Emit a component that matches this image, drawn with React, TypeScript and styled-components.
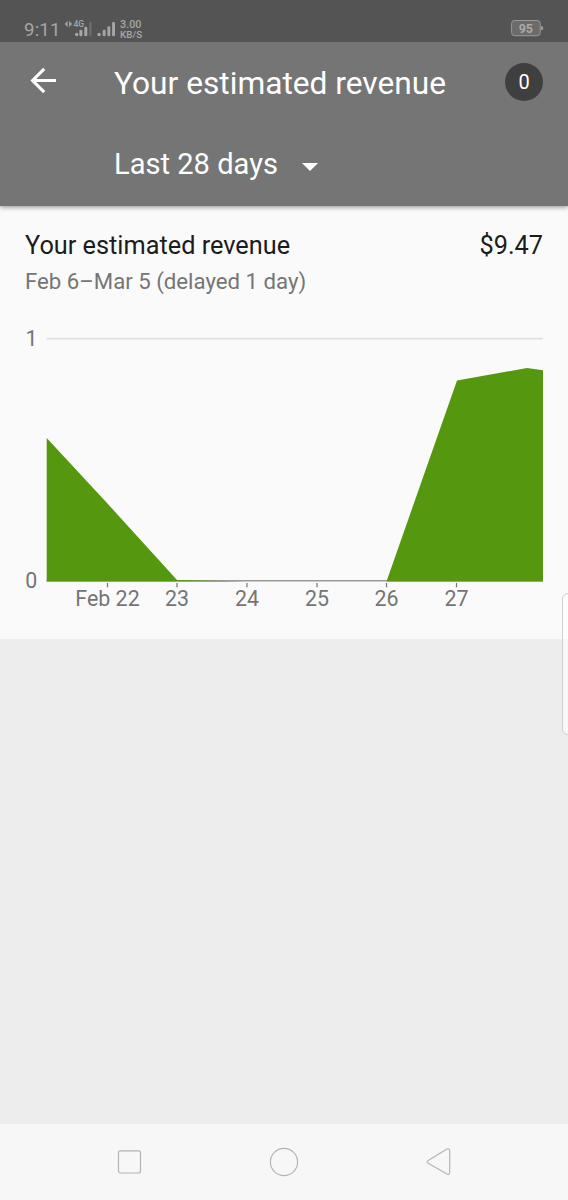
import React from "react";
import styled, { createGlobalStyle } from "styled-components";

const GlobalStyle = createGlobalStyle`
  * { box-sizing: border-box; }
  body { margin: 0; background: #ededed; font-family: Roboto, "Liberation Sans", sans-serif; }
`;

const Screen = styled.div`
  position: relative;
  display: flex;
  flex-direction: column;
  width: 568px;
  height: 1200px;
  overflow: hidden;
  background: #ededed;
`;

const StatusBar = styled.div`
  position: relative;
  z-index: 2;
  display: flex;
  justify-content: space-between;
  align-items: flex-start;
  height: 42px;
  padding: 18px 24px 0 24px;
  background: #545454;
  color: #a6a6a6;
`;

const StatusGroup = styled.div`
  display: flex;
  align-items: flex-start;
`;

const Clock = styled.span`
  width: 40px;
  font-size: 18.6px;
  line-height: 24px;
  letter-spacing: 0.2px;
  white-space: nowrap;
`;

const Speed = styled.span`
  display: flex;
  flex-direction: column;
  margin-top: 2px;
  font-weight: 500;
`;

const SpeedLine = styled.span<{ $size: number }>`
  font-size: ${({ $size }) => $size}px;
  line-height: 10px;
`;

const Header = styled.header`
  position: relative;
  z-index: 1;
  display: flex;
  flex-direction: column;
  height: 164px;
  background: #757575;
  color: #fff;
  box-shadow: 0 1px 5px rgba(0, 0, 0, 0.45);
`;

const TitleRow = styled.div`
  display: flex;
  flex: none;
  align-items: center;
  height: 79px;
  padding: 0 25px 0 30px;
`;

const Title = styled.h1`
  flex: 1;
  margin: 4px 0 0 57px;
  font-size: 31.7px;
  font-weight: 400;
  line-height: 38px;
  white-space: nowrap;
`;

const Count = styled.span`
  width: 38px;
  height: 38px;
  border-radius: 50%;
  background: #3f3f3f;
  font-size: 20px;
  line-height: 39px;
  text-align: center;
`;

const PeriodRow = styled.div`
  display: flex;
  flex: none;
  align-items: center;
  gap: 24px;
  height: 86px;
  padding-left: 114px;
  font-size: 29.1px;
`;

const DropdownArrow = styled.svg`
  margin-top: 6px;
`;

const Card = styled.section`
  height: 433px;
  padding-top: 23px;
  background: #fafafa;
`;

const Summary = styled.div`
  display: flex;
  justify-content: space-between;
  padding: 0 25px;
  color: #1c1c1c;
  font-size: 25.3px;
  line-height: 34px;
`;

const DateRange = styled.div`
  margin-top: -1px;
  padding: 0 25px;
  color: #757575;
  font-size: 22.2px;
  line-height: 38px;
`;

const Chart = styled.svg`
  display: block;
  font-family: Roboto, "Liberation Sans", sans-serif;
  font-size: 21.4px;
`;

const NavBar = styled.nav`
  display: flex;
  align-items: center;
  justify-content: space-between;
  height: 76px;
  margin-top: auto;
  padding: 0 115px;
  background: #f7f7f7;
`;

const EdgeHandle = styled.div`
  position: absolute;
  top: 593px;
  right: -8px;
  width: 14px;
  height: 142px;
  border: 1px solid #cfcfcf;
  border-radius: 6px;
  background: rgba(255, 255, 255, 0.6);
`;

const ticks = [
  { x: 107.5, label: "Feb 22" },
  { x: 177, label: "23" },
  { x: 247, label: "24" },
  { x: 317, label: "25" },
  { x: 386.5, label: "26" },
  { x: 456.5, label: "27" },
];

function SignalIcons() {
  return (
    <svg width="56" height="24" viewBox="64 18 56 24" fill="#a6a6a6">
      <path d="M64.8 24l2.8-3.2v6.4zM72 24l-2.8-3.2v6.4z" />
      <text x="73.5" y="27.4" fontSize="8.5" fontWeight="500">4G</text>
      <circle cx="76.7" cy="34.5" r="1.7" />
      <rect x="79.4" y="29.8" width="3" height="6.4" rx="1.2" />
      <rect x="84.3" y="26.8" width="3" height="9.4" rx="1.2" />
      <rect x="89.2" y="22" width="2.4" height="14.2" rx="1" fill="#6d6d6d" />
      <circle cx="99.1" cy="34.5" r="1.7" />
      <rect x="102.7" y="29.8" width="2.9" height="6.4" rx="1.2" />
      <rect x="107.4" y="26.3" width="2.9" height="9.9" rx="1.2" />
      <rect x="112.1" y="22" width="2.9" height="14.2" rx="1.2" />
    </svg>
  );
}

function Battery() {
  return (
    <svg width="33" height="20" viewBox="0 0 33 20">
      <rect x="0.6" y="2.5" width="28.6" height="15.2" rx="3" fill="#6b6b6b" stroke="#999" />
      <path d="M30 8.2h1.3q.9 0 .9 1.9t-.9 1.9H30z" fill="#999" />
      <text x="14.8" y="14.7" textAnchor="middle" fontSize="12.5" fontWeight="700" fill="#a9a9a9">95</text>
    </svg>
  );
}

export default function App() {
  return (
    <Screen>
      <GlobalStyle />
      <StatusBar>
        <StatusGroup>
          <Clock>9:11</Clock>
          <SignalIcons />
          <Speed>
            <SpeedLine $size={10.8}>3.00</SpeedLine>
            <SpeedLine $size={9.8}>KB/S</SpeedLine>
          </Speed>
        </StatusGroup>
        <Battery />
      </StatusBar>
      <Header>
        <TitleRow>
          <svg width="27" height="27" viewBox="0 0 27 27" fill="none" stroke="#fff" strokeWidth="3.1">
            <path d="M26 12.5H3M14.2 .9L2.6 12.5l11.6 11.6" />
          </svg>
          <Title>Your estimated revenue</Title>
          <Count>0</Count>
        </TitleRow>
        <PeriodRow>
          <span>Last 28 days</span>
          <DropdownArrow width="16" height="8" viewBox="0 0 16 8" fill="#fff">
            <path d="M0 0h16L8 8z" />
          </DropdownArrow>
        </PeriodRow>
      </Header>
      <Card>
        <Summary>
          <span>Your estimated revenue</span>
          <span>$9.47</span>
        </Summary>
        <DateRange>Feb 6–Mar 5 (delayed 1 day)</DateRange>
        <Chart width="568" height="320" viewBox="0 300 568 320">
          <path d="M46.5 338.6H543" stroke="#e0e0e0" strokeWidth="1.7" />
          <path d="M46.5 580.8H543" stroke="#9a9a9a" strokeWidth="1.6" />
          <path
            d="M46.7 438L107 503L177 580L247 581.4H46.7zM386.5 581.4L457 380.5L527 368L543 370.3V581.4z"
            fill="#55980f"
          />
          <g fill="#757575">
            <text x="25.5" y="345.5">1</text>
            <text x="25.3" y="588">0</text>
            {ticks.map(({ x, label }) => (
              <React.Fragment key={label}>
                <rect x={x - 0.6} y="583" width="1.2" height="4.3" />
                <text x={x} y="606" textAnchor="middle">{label}</text>
              </React.Fragment>
            ))}
          </g>
        </Chart>
      </Card>
      <NavBar>
        <svg width="28" height="30" viewBox="0 0 28 30" fill="none" stroke="#b4b4b4" strokeWidth="1.2">
          <rect x="3.5" y="3.8" width="22" height="22.2" rx="2" />
        </svg>
        <svg width="30" height="30" viewBox="0 0 30 30" fill="none" stroke="#b4b4b4" strokeWidth="1.2">
          <circle cx="15" cy="15" r="13.6" />
        </svg>
        <svg width="28" height="30" viewBox="0 0 28 30" fill="none" stroke="#b4b4b4" strokeWidth="1.2">
          <path d="M3.2 13.4L21.6 2.2Q24.7 .8 24.7 4V25.3Q24.7 28.5 21.6 26.8L3.2 16.2Q1.2 14.8 3.2 13.4z" />
        </svg>
      </NavBar>
      <EdgeHandle />
    </Screen>
  );
}
